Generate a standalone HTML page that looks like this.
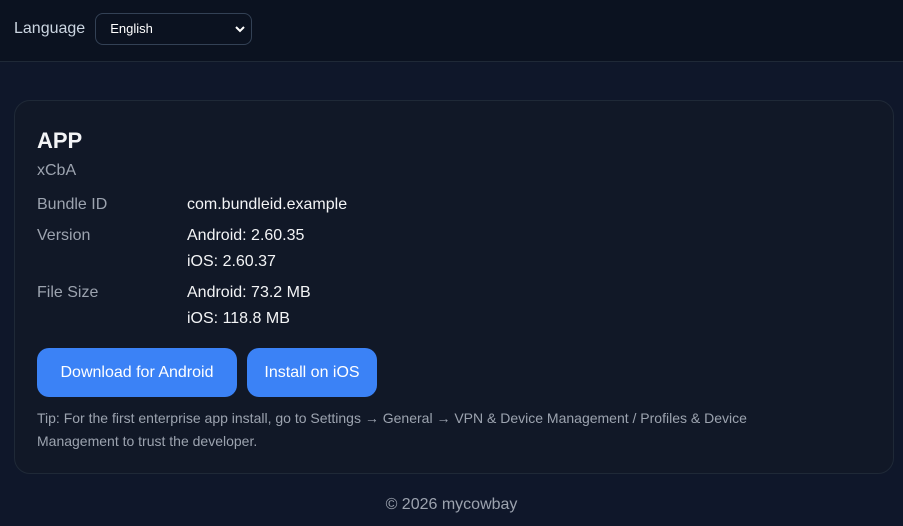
<!DOCTYPE html>
<html><head><meta charset="utf-8"><style>
*{box-sizing:border-box;margin:0;padding:0}
body{width:903px;height:526px;background:#0f172a;font-family:"Liberation Sans",sans-serif;color:#e5e7eb;overflow:hidden}
.hdr{height:62px;background:#0b1220;border-bottom:1px solid #1f2937;display:flex;align-items:center;padding-left:14px;padding-bottom:4px}
.hdr span{font-size:16px;color:#cbd5e1;margin-right:10px}
.sel{width:157px;height:32px;border:1px solid #334155;border-radius:8px;background:#0b1220;color:#fff;font-size:13px;display:flex;align-items:center;padding-left:14px;position:relative}
.sel svg{position:absolute;right:6px;top:11px}
.card{position:absolute;left:14px;top:100px;width:880px;height:374px;background:#111827;border:1px solid #1f2937;border-radius:16px;padding:0 23px}
.t{position:absolute;font-size:16px}
.l{left:22px;color:#9ca3af}
.v{left:172px;color:#f3f4f6}
.btn{position:absolute;top:247px;height:49px;background:#3b82f6;border-radius:12px;color:#fff;font-size:16px;display:flex;align-items:center;justify-content:center}
.tip{position:absolute;left:22px;top:306px;width:770px;font-size:14px;line-height:23px;color:#9ca3af}
.ft{position:absolute;top:496px;width:903px;text-align:center;font-size:16px;color:#9ca3af}
</style></head><body>
<div class="hdr"><span>Language</span><div class="sel">English<svg width="10" height="8" viewBox="0 0 10 8"><path d="M1 2l4 4 4-4" stroke="#fff" stroke-width="2" fill="none"/></svg></div></div>
<div class="card">
<div class="t" style="left:22px;top:27px;font-size:22px;font-weight:bold;color:#f3f4f6">APP</div>
<div class="t l" style="top:61px">xCbA</div>
<div class="t l" style="top:95px">Bundle ID</div><div class="t v" style="top:95px">com.bundleid.example</div>
<div class="t l" style="top:126px">Version</div><div class="t v" style="top:126px">Android: 2.60.35</div>
<div class="t v" style="top:152px">iOS: 2.60.37</div>
<div class="t l" style="top:183px">File Size</div><div class="t v" style="top:183px">Android: 73.2 MB</div>
<div class="t v" style="top:209px">iOS: 118.8 MB</div>
<div class="btn" style="left:22px;width:200px">Download for Android</div>
<div class="btn" style="left:232px;width:130px">Install on iOS</div>
<div class="tip">Tip: For the first enterprise app install, go to Settings → General → VPN &amp; Device Management / Profiles &amp; Device<br>Management to trust the developer.</div>
</div>
<div class="ft">© 2026 mycowbay</div>
</body></html>
